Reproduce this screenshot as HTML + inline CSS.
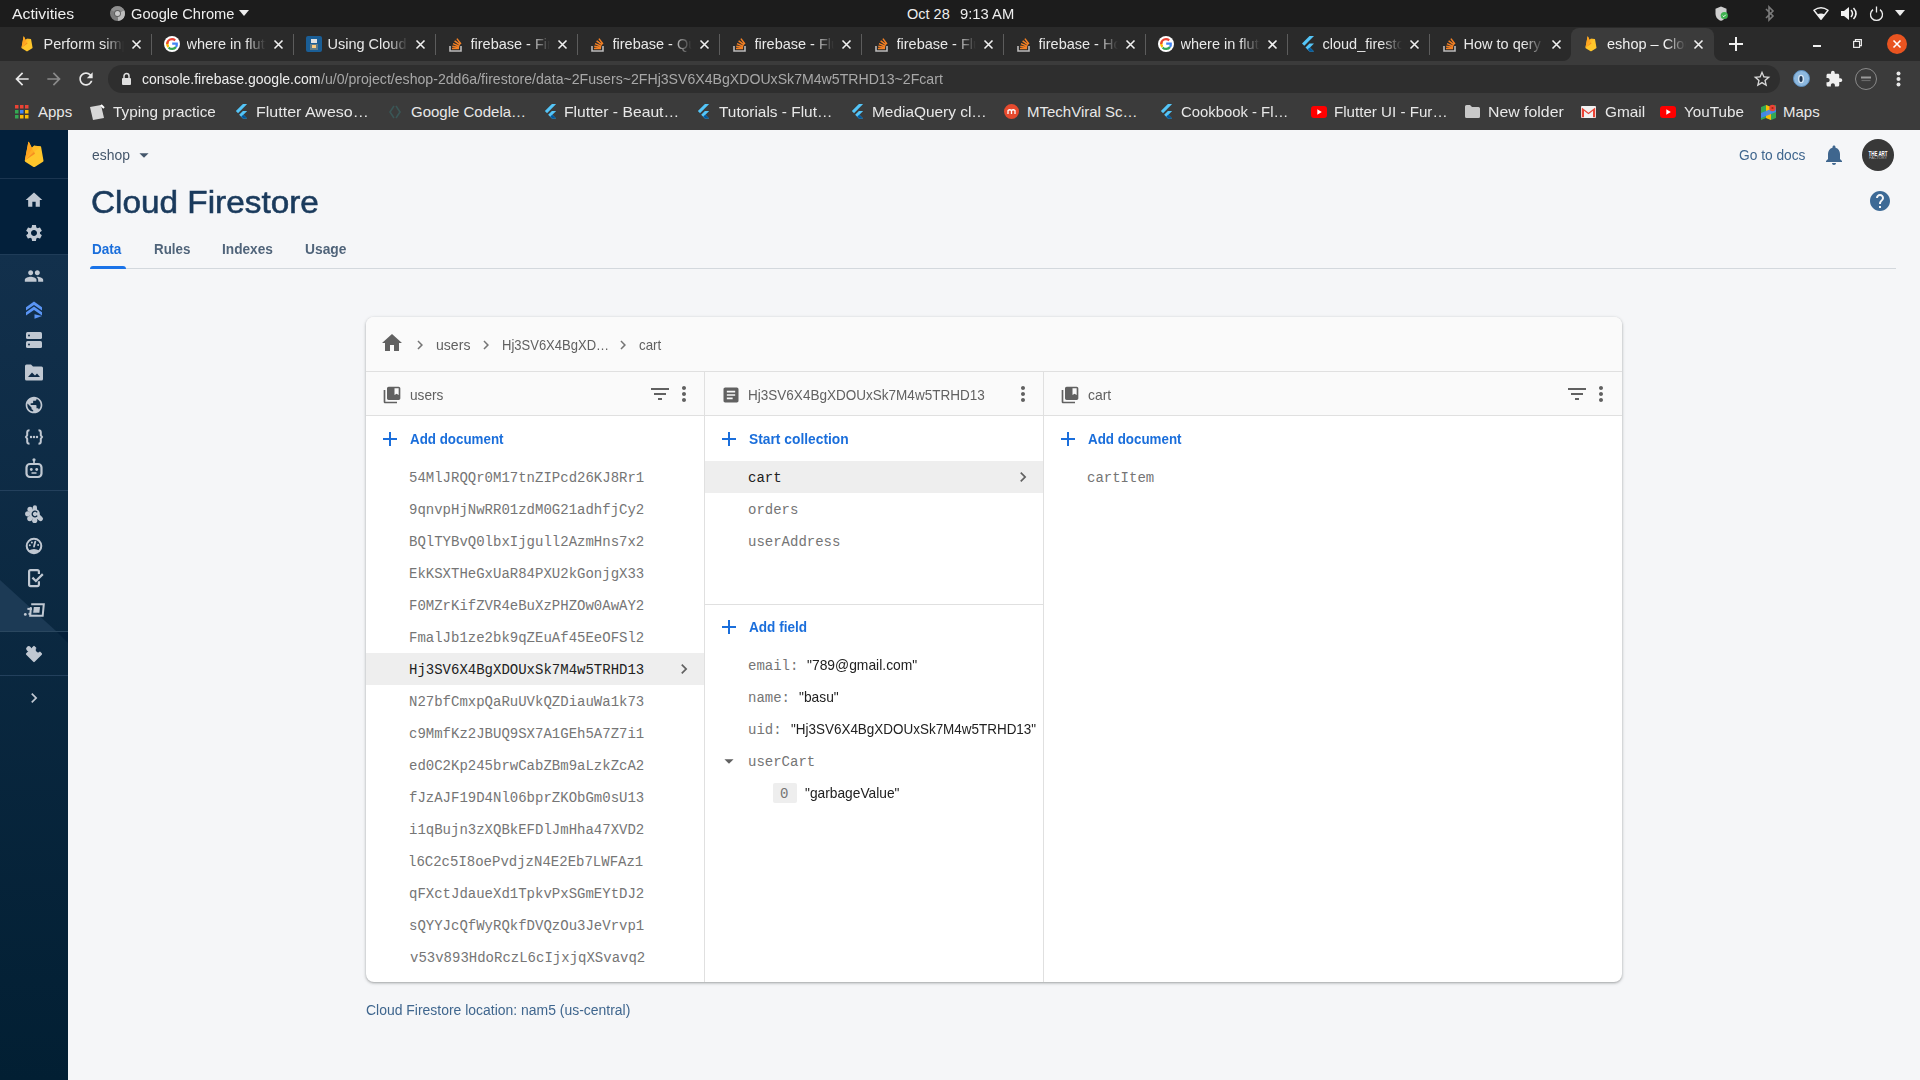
<!DOCTYPE html>
<html><head><meta charset="utf-8"><title>eshop - Cloud Firestore</title>
<style>
*{box-sizing:border-box;margin:0;padding:0}
html,body{width:1920px;height:1080px;overflow:hidden;background:#f5f6f8;font-family:"Liberation Sans",sans-serif}
.a{position:absolute}
.t{position:absolute;line-height:0;white-space:nowrap}
svg.a{overflow:visible}
</style></head><body>
<div class="a" style="left:0px;top:0px;width:1920px;height:27px;background:#1c1c1c;"></div>
<svg class="a" style="left:110px;top:5.5px;" width="15" height="15" viewBox="0 0 15 15"><circle cx="7.5" cy="7.5" r="7.5" fill="#7a7a7a"/><path d="M7.5 7.5L14.2 4.2A7.5 7.5 0 0 1 8.2 15z" fill="#bdbdbd"/><path d="M7.5 7.5L1 4A7.5 7.5 0 0 1 14.2 4.2z" fill="#8f8f8f"/><circle cx="7.5" cy="7.5" r="3.4" fill="#5e5e5e"/><circle cx="7.5" cy="7.5" r="2.5" fill="#c8c8c8"/></svg>
<svg class="a" style="left:239px;top:10px;" width="10" height="6" viewBox="0 0 10 6"><path d="M0 0h10L5 6z" fill="#eeeeee"/></svg>
<svg class="a" style="left:1715px;top:5.5px;" width="14" height="15" viewBox="0 0 14 15"><path d="M6 0.5L11.5 2.8v4.6c0 3.6-2.3 6.4-5.5 7.3C2.8 13.8 0.5 11 0.5 7.4V2.8z" fill="#cfcfcf"/><circle cx="9.3" cy="9.5" r="3.6" fill="#3fb24f"/><path d="M7.7 9.6l1.1 1.1 2-2" stroke="#fff" stroke-width="1" fill="none"/></svg>
<svg class="a" style="left:1764px;top:5px;" width="11" height="17" viewBox="0 0 11 17"><path d="M2 4l7 7-4 4V2l4 4-7 7" stroke="#7a7a7a" stroke-width="1.6" fill="none"/></svg>
<svg class="a" style="left:1813px;top:6.5px;" width="16" height="13" viewBox="0 0 16 13"><path d="M8 12.2L0.9 3.2Q8 -1.8 15.1 3.2z" fill="none" stroke="#f0f0f0" stroke-width="1.4" stroke-linejoin="round"/><path d="M8 12.2L4.2 7.4Q8 5.6 11.8 7.4z" fill="#f0f0f0"/></svg>
<svg class="a" style="left:1840px;top:6px;" width="18" height="15" viewBox="0 0 18 15"><path d="M1 5h3l5-4v13l-5-4H1z" fill="#f0f0f0"/><path d="M11 4q3 3.5 0 7M13.5 2q5 5.5 0 11" stroke="#f0f0f0" stroke-width="1.5" fill="none"/></svg>
<svg class="a" style="left:1869px;top:5.5px;" width="15" height="14" viewBox="0 0 15 14"><path d="M4 3.6A6 6 0 1 0 11 3.6" stroke="#f0f0f0" stroke-width="1.3" fill="none"/><path d="M7.5 0.5v6" stroke="#f0f0f0" stroke-width="1.3"/></svg>
<svg class="a" style="left:1895px;top:10px;" width="10" height="6" viewBox="0 0 10 6"><path d="M0 0h10L5 6z" fill="#eeeeee"/></svg>
<div class="a" style="left:0px;top:27px;width:1920px;height:34px;background:#2a2a2a;"></div>
<svg class="a" style="left:21.4px;top:36.3px;" width="12.0" height="15.6" viewBox="0 0 20 26"><path d="M0.8 19.4L4.3 1Q4.5 0.3 4.9 1L7.6 6.6 9.8 4.6Q10.2 4.3 10.7 4.6L16.4 5.2Q16.8 5.3 16.9 5.8L19.3 19.6Q19.4 20.2 18.8 20.5L10.6 25.6Q10 25.9 9.4 25.6L1.2 20.4Q0.7 20 0.8 19.4z" fill="#FFC62B"/><path d="M0.8 19.4L4.3 1Q4.5 0.3 4.9 1L9.6 10.2z" fill="#FFA21F"/><path d="M0.8 19.4L9.6 10.2 10.9 12.7z" fill="#F58220" opacity=".85"/><path d="M9.8 4.6Q10.2 4.3 10.7 4.6L16.4 5.2 0.8 19.4z" fill="#FFB626" opacity=".6"/></svg>
<svg class="a" style="left:131.5px;top:40px;" width="9" height="9" viewBox="0 0 9 9"><path d="M0.5 0.5L8.5 8.5M8.5 0.5L0.5 8.5" stroke="#f0f0f0" stroke-width="1.6"/></svg>
<div class="a" style="left:151px;top:34px;width:1px;height:21px;background:#5c5c5c;"></div>
<svg class="a" style="left:163.5px;top:36px;" width="16" height="16" viewBox="0 0 16 16"><circle cx="8" cy="8" r="8" fill="#fff"/><path d="M8 3.2a4.8 4.8 0 0 1 3.2 1.2" stroke="#EA4335" stroke-width="2.2" fill="none"/><path d="M4.4 5a4.8 4.8 0 0 0 0 6" stroke="#FBBC05" stroke-width="2.2" fill="none"/><path d="M4.6 11.4A4.8 4.8 0 0 0 12 11" stroke="#34A853" stroke-width="2.2" fill="none"/><path d="M12 11a4.8 4.8 0 0 0 .8-3.4H8.2" stroke="#4285F4" stroke-width="2.2" fill="none"/><path d="M3.2 8a4.8 4.8 0 0 1 4.8-4.8" stroke="#EA4335" stroke-width="2.2" fill="none"/></svg>
<svg class="a" style="left:273.5px;top:40px;" width="9" height="9" viewBox="0 0 9 9"><path d="M0.5 0.5L8.5 8.5M8.5 0.5L0.5 8.5" stroke="#f0f0f0" stroke-width="1.6"/></svg>
<div class="a" style="left:293px;top:34px;width:1px;height:21px;background:#5c5c5c;"></div>
<svg class="a" style="left:305.5px;top:36px;" width="16" height="16" viewBox="0 0 16 16"><rect width="16" height="16" rx="2" fill="#1a5e96"/><rect x="5" y="3" width="6" height="4" fill="#e0e0e0"/><rect x="4" y="8" width="8" height="6" fill="#607d8b"/><rect x="6" y="9" width="4" height="3" fill="#ffcc80"/></svg>
<svg class="a" style="left:415.5px;top:40px;" width="9" height="9" viewBox="0 0 9 9"><path d="M0.5 0.5L8.5 8.5M8.5 0.5L0.5 8.5" stroke="#f0f0f0" stroke-width="1.6"/></svg>
<div class="a" style="left:435px;top:34px;width:1px;height:21px;background:#5c5c5c;"></div>
<svg class="a" style="left:447.5px;top:36px;" width="16" height="16" viewBox="0 0 16 16"><path d="M2 10v5h11v-5" stroke="#bcbbbb" stroke-width="1.6" fill="none"/><path d="M4 12.5h7M4.3 10.2l6.8 1.2M5 7.6l6.3 2.7M6.6 4.9l5.5 4M8.9 2.6l4 5.4" stroke="#f48024" stroke-width="1.5"/></svg>
<svg class="a" style="left:557.5px;top:40px;" width="9" height="9" viewBox="0 0 9 9"><path d="M0.5 0.5L8.5 8.5M8.5 0.5L0.5 8.5" stroke="#f0f0f0" stroke-width="1.6"/></svg>
<div class="a" style="left:577px;top:34px;width:1px;height:21px;background:#5c5c5c;"></div>
<svg class="a" style="left:589.5px;top:36px;" width="16" height="16" viewBox="0 0 16 16"><path d="M2 10v5h11v-5" stroke="#bcbbbb" stroke-width="1.6" fill="none"/><path d="M4 12.5h7M4.3 10.2l6.8 1.2M5 7.6l6.3 2.7M6.6 4.9l5.5 4M8.9 2.6l4 5.4" stroke="#f48024" stroke-width="1.5"/></svg>
<svg class="a" style="left:699.5px;top:40px;" width="9" height="9" viewBox="0 0 9 9"><path d="M0.5 0.5L8.5 8.5M8.5 0.5L0.5 8.5" stroke="#f0f0f0" stroke-width="1.6"/></svg>
<div class="a" style="left:719px;top:34px;width:1px;height:21px;background:#5c5c5c;"></div>
<svg class="a" style="left:731.5px;top:36px;" width="16" height="16" viewBox="0 0 16 16"><path d="M2 10v5h11v-5" stroke="#bcbbbb" stroke-width="1.6" fill="none"/><path d="M4 12.5h7M4.3 10.2l6.8 1.2M5 7.6l6.3 2.7M6.6 4.9l5.5 4M8.9 2.6l4 5.4" stroke="#f48024" stroke-width="1.5"/></svg>
<svg class="a" style="left:841.5px;top:40px;" width="9" height="9" viewBox="0 0 9 9"><path d="M0.5 0.5L8.5 8.5M8.5 0.5L0.5 8.5" stroke="#f0f0f0" stroke-width="1.6"/></svg>
<div class="a" style="left:861px;top:34px;width:1px;height:21px;background:#5c5c5c;"></div>
<svg class="a" style="left:873.5px;top:36px;" width="16" height="16" viewBox="0 0 16 16"><path d="M2 10v5h11v-5" stroke="#bcbbbb" stroke-width="1.6" fill="none"/><path d="M4 12.5h7M4.3 10.2l6.8 1.2M5 7.6l6.3 2.7M6.6 4.9l5.5 4M8.9 2.6l4 5.4" stroke="#f48024" stroke-width="1.5"/></svg>
<svg class="a" style="left:983.5px;top:40px;" width="9" height="9" viewBox="0 0 9 9"><path d="M0.5 0.5L8.5 8.5M8.5 0.5L0.5 8.5" stroke="#f0f0f0" stroke-width="1.6"/></svg>
<div class="a" style="left:1003px;top:34px;width:1px;height:21px;background:#5c5c5c;"></div>
<svg class="a" style="left:1015.5px;top:36px;" width="16" height="16" viewBox="0 0 16 16"><path d="M2 10v5h11v-5" stroke="#bcbbbb" stroke-width="1.6" fill="none"/><path d="M4 12.5h7M4.3 10.2l6.8 1.2M5 7.6l6.3 2.7M6.6 4.9l5.5 4M8.9 2.6l4 5.4" stroke="#f48024" stroke-width="1.5"/></svg>
<svg class="a" style="left:1125.5px;top:40px;" width="9" height="9" viewBox="0 0 9 9"><path d="M0.5 0.5L8.5 8.5M8.5 0.5L0.5 8.5" stroke="#f0f0f0" stroke-width="1.6"/></svg>
<div class="a" style="left:1145px;top:34px;width:1px;height:21px;background:#5c5c5c;"></div>
<svg class="a" style="left:1157.5px;top:36px;" width="16" height="16" viewBox="0 0 16 16"><circle cx="8" cy="8" r="8" fill="#fff"/><path d="M8 3.2a4.8 4.8 0 0 1 3.2 1.2" stroke="#EA4335" stroke-width="2.2" fill="none"/><path d="M4.4 5a4.8 4.8 0 0 0 0 6" stroke="#FBBC05" stroke-width="2.2" fill="none"/><path d="M4.6 11.4A4.8 4.8 0 0 0 12 11" stroke="#34A853" stroke-width="2.2" fill="none"/><path d="M12 11a4.8 4.8 0 0 0 .8-3.4H8.2" stroke="#4285F4" stroke-width="2.2" fill="none"/><path d="M3.2 8a4.8 4.8 0 0 1 4.8-4.8" stroke="#EA4335" stroke-width="2.2" fill="none"/></svg>
<svg class="a" style="left:1267.5px;top:40px;" width="9" height="9" viewBox="0 0 9 9"><path d="M0.5 0.5L8.5 8.5M8.5 0.5L0.5 8.5" stroke="#f0f0f0" stroke-width="1.6"/></svg>
<div class="a" style="left:1287px;top:34px;width:1px;height:21px;background:#5c5c5c;"></div>
<svg class="a" style="left:1299.5px;top:36px;" width="16" height="16" viewBox="0 0 16 16"><path d="M9.5 0L2 7.5l2.3 2.3L14 0z" fill="#54c5f8"/><path d="M9.5 7.4L5.5 11.4l4 4H14l-4-4 4-4z" fill="#54c5f8"/><path d="M7.8 13.1l1.7 2.3H14l-4-4z" fill="#01579b"/></svg>
<svg class="a" style="left:1409.5px;top:40px;" width="9" height="9" viewBox="0 0 9 9"><path d="M0.5 0.5L8.5 8.5M8.5 0.5L0.5 8.5" stroke="#f0f0f0" stroke-width="1.6"/></svg>
<div class="a" style="left:1429px;top:34px;width:1px;height:21px;background:#5c5c5c;"></div>
<svg class="a" style="left:1441.5px;top:36px;" width="16" height="16" viewBox="0 0 16 16"><path d="M2 10v5h11v-5" stroke="#bcbbbb" stroke-width="1.6" fill="none"/><path d="M4 12.5h7M4.3 10.2l6.8 1.2M5 7.6l6.3 2.7M6.6 4.9l5.5 4M8.9 2.6l4 5.4" stroke="#f48024" stroke-width="1.5"/></svg>
<svg class="a" style="left:1551.5px;top:40px;" width="9" height="9" viewBox="0 0 9 9"><path d="M0.5 0.5L8.5 8.5M8.5 0.5L0.5 8.5" stroke="#f0f0f0" stroke-width="1.6"/></svg>
<div class="a" style="left:1571px;top:28px;width:143px;height:34px;background:#3b3b3b;border-radius:8px 8px 0 0"></div>
<div class="a" style="left:1563px;top:53px;width:8px;height:8px;background:radial-gradient(circle at 0 0,#2a2a2a 7.5px,#3b3b3b 8.5px)"></div>
<div class="a" style="left:1714px;top:53px;width:8px;height:8px;background:radial-gradient(circle at 100% 0,#2a2a2a 7.5px,#3b3b3b 8.5px)"></div>
<svg class="a" style="left:1585px;top:36px;" width="11.923076923076923" height="15.5" viewBox="0 0 20 26"><path d="M0.8 19.4L4.3 1Q4.5 0.3 4.9 1L7.6 6.6 9.8 4.6Q10.2 4.3 10.7 4.6L16.4 5.2Q16.8 5.3 16.9 5.8L19.3 19.6Q19.4 20.2 18.8 20.5L10.6 25.6Q10 25.9 9.4 25.6L1.2 20.4Q0.7 20 0.8 19.4z" fill="#FFC62B"/><path d="M0.8 19.4L4.3 1Q4.5 0.3 4.9 1L9.6 10.2z" fill="#FFA21F"/><path d="M0.8 19.4L9.6 10.2 10.9 12.7z" fill="#F58220" opacity=".85"/><path d="M9.8 4.6Q10.2 4.3 10.7 4.6L16.4 5.2 0.8 19.4z" fill="#FFB626" opacity=".6"/></svg>
<svg class="a" style="left:1694px;top:40px;" width="9" height="9" viewBox="0 0 9 9"><path d="M0.5 0.5L8.5 8.5M8.5 0.5L0.5 8.5" stroke="#f0f0f0" stroke-width="1.6"/></svg>
<svg class="a" style="left:1729px;top:37px;" width="14" height="14" viewBox="0 0 14 14"><path d="M7 0v14M0 7h14" stroke="#f0f0f0" stroke-width="2"/></svg>
<div class="a" style="left:1813px;top:45px;width:8px;height:2px;background:#f0f0f0;"></div>
<svg class="a" style="left:1853px;top:39px;" width="9" height="9" viewBox="0 0 10 10"><rect x="0.7" y="2.7" width="6.6" height="6.6" stroke="#f0f0f0" stroke-width="1.3" fill="none"/><path d="M2.7 2.7V0.7h6.6v6.6H7.3" stroke="#f0f0f0" stroke-width="1.3" fill="none"/></svg>
<svg class="a" style="left:1887px;top:34px;" width="20" height="20" viewBox="0 0 20 20"><circle cx="10" cy="10" r="10" fill="#e95420"/><path d="M6.5 6.5l7 7M13.5 6.5l-7 7" stroke="#fff" stroke-width="1.6"/></svg>
<div class="a" style="left:0px;top:61px;width:1920px;height:34px;background:#3b3b3b;"></div>
<svg class="a" style="left:12.0px;top:69.0px;" width="20" height="20" viewBox="0 0 24 24"><path fill="#e8e8e8" d="M20 11H7.83l5.59-5.59L12 4l-8 8 8 8 1.41-1.41L7.830 13H20v-2z"/></svg>
<svg class="a" style="left:44.0px;top:69.0px;" width="20" height="20" viewBox="0 0 24 24"><path fill="#8a8a8a" d="M12 4l-1.41 1.41L16.17 11H4v2h12.17l-5.58 5.59L12 20l8-8z"/></svg>
<svg class="a" style="left:76.0px;top:69.0px;" width="20" height="20" viewBox="0 0 24 24"><path fill="#e8e8e8" d="M17.65 6.35C16.2 4.9 14.21 4 12 4c-4.42 0-7.99 3.58-7.99 8s3.57 8 7.990 8c3.73 0 6.84-2.55 7.73-6h-2.08c-.82 2.33-3.04 4-5.65 4-3.31 0-6-2.69-6-6s2.69-6 6-6c1.66 0 3.14.69 4.22 1.78L13 11h7V4l-2.35 2.35z"/></svg>
<div class="a" style="left:108px;top:65px;width:1672px;height:28px;background:#2e2e2e;border-radius:14px"></div>
<svg class="a" style="left:122px;top:72px;" width="9" height="13" viewBox="0 0 9 13"><path d="M2 6V4a2.5 2.5 0 0 1 5 0v2" stroke="#e0e0e0" stroke-width="1.5" fill="none"/><rect x="0" y="6" width="9" height="7" rx="1" fill="#e0e0e0"/></svg>
<svg class="a" style="left:1752.0px;top:69.0px;" width="20" height="20" viewBox="0 0 24 24"><path fill="#d8d8d8" d="M22 9.24l-7.19-.62L12 2 9.19 8.63 2 9.24l5.46 4.73L5.82 21 12 17.27 18.18 21l-1.63-7.03L22 9.24zM12 15.4l-3.76 2.27 1-4.28-3.32-2.88 4.38-.38L12 6.1l1.71 4.04 4.38.38-3.32 2.88 1 4.28L12 15.4z"/></svg>
<svg class="a" style="left:1793px;top:70px;" width="17" height="17" viewBox="0 0 17 17"><circle cx="8.5" cy="8.5" r="8" fill="#8db8de"/><circle cx="8.5" cy="8.5" r="8" fill="none" stroke="#5d8fbf" stroke-width="1"/><ellipse cx="8" cy="9" rx="3" ry="4.2" fill="#d6e6f4"/><ellipse cx="8" cy="9" rx="1.6" ry="3" fill="#1f3550"/></svg>
<svg class="a" style="left:1825.0px;top:70.0px;" width="18" height="18" viewBox="0 0 24 24"><path fill="#f0f0f0" d="M20.5 11H19V7c0-1.1-.9-2-2-2h-4V3.5C13 2.12 11.88 1 10.5 1S8 2.120 8 3.5V5H4c-1.1 0-1.99.9-1.99 2v3.8H3.5c1.49 0 2.7 1.21 2.7 2.7s-1.21 2.7-2.7 2.7H2V20c0 1.1.9 2 2 2h3.8v-1.5c0-1.49 1.21-2.7 2.7-2.7 1.49 0 2.7 1.21 2.7 2.7V22H17c1.1 0 2-.9 2-2v-4h1.5c1.38 0 2.5-1.12 2.5-2.5S21.88 11 20.5 11z"/></svg>
<svg class="a" style="left:1855px;top:68px;" width="22" height="22" viewBox="0 0 22 22"><circle cx="11" cy="11" r="10.5" fill="#3b3b3b" stroke="#8a8a8a" stroke-width="1"/><path d="M6 9.5h10" stroke="#9a9a9a" stroke-width="2"/><path d="M6.5 12.5h9" stroke="#6a6a6a" stroke-width="1.2"/></svg>
<svg class="a" style="left:1896px;top:71px;" width="5" height="16" viewBox="0 0 5 16"><circle cx="2.5" cy="2.5" r="2" fill="#e8e8e8"/><circle cx="2.5" cy="8" r="2" fill="#e8e8e8"/><circle cx="2.5" cy="13.5" r="2" fill="#e8e8e8"/></svg>
<div class="a" style="left:0px;top:95px;width:1920px;height:35px;background:#3b3b3b;"></div>
<svg class="a" style="left:15px;top:105px;" width="14" height="14" viewBox="0 0 14 14"><rect x="0" y="0" width="3.5" height="3.5" fill="#ea4335"/><rect x="5" y="0" width="3.5" height="3.5" fill="#ea4335"/><rect x="10" y="0" width="3.5" height="3.5" fill="#ea4335"/><rect x="0" y="5" width="3.5" height="3.5" fill="#34a853"/><rect x="5" y="5" width="3.5" height="3.5" fill="#4285f4"/><rect x="10" y="5" width="3.5" height="3.5" fill="#fbbc05"/><rect x="0" y="10" width="3.5" height="3.5" fill="#34a853"/><rect x="5" y="10" width="3.5" height="3.5" fill="#fbbc05"/><rect x="10" y="10" width="3.5" height="3.5" fill="#fbbc05"/></svg>
<svg class="a" style="left:89px;top:104px;" width="16" height="16" viewBox="0 0 16 16"><path d="M1 3l11-2 3 13-11 2z" fill="#d6d6d6"/><path d="M12 1l3 3" stroke="#fff" stroke-width="2"/></svg>
<svg class="a" style="left:234px;top:104px;" width="15" height="15" viewBox="0 0 16 16"><path d="M9.5 0L2 7.5l2.3 2.3L14 0z" fill="#54c5f8"/><path d="M9.5 7.4L5.5 11.4l4 4H14l-4-4 4-4z" fill="#54c5f8"/><path d="M7.8 13.1l1.7 2.3H14l-4-4z" fill="#01579b"/></svg>
<svg class="a" style="left:543px;top:104px;" width="15" height="15" viewBox="0 0 16 16"><path d="M9.5 0L2 7.5l2.3 2.3L14 0z" fill="#54c5f8"/><path d="M9.5 7.4L5.5 11.4l4 4H14l-4-4 4-4z" fill="#54c5f8"/><path d="M7.8 13.1l1.7 2.3H14l-4-4z" fill="#01579b"/></svg>
<svg class="a" style="left:696px;top:104px;" width="15" height="15" viewBox="0 0 16 16"><path d="M9.5 0L2 7.5l2.3 2.3L14 0z" fill="#54c5f8"/><path d="M9.5 7.4L5.5 11.4l4 4H14l-4-4 4-4z" fill="#54c5f8"/><path d="M7.8 13.1l1.7 2.3H14l-4-4z" fill="#01579b"/></svg>
<svg class="a" style="left:850px;top:104px;" width="15" height="15" viewBox="0 0 16 16"><path d="M9.5 0L2 7.5l2.3 2.3L14 0z" fill="#54c5f8"/><path d="M9.5 7.4L5.5 11.4l4 4H14l-4-4 4-4z" fill="#54c5f8"/><path d="M7.8 13.1l1.7 2.3H14l-4-4z" fill="#01579b"/></svg>
<svg class="a" style="left:1159px;top:104px;" width="15" height="15" viewBox="0 0 16 16"><path d="M9.5 0L2 7.5l2.3 2.3L14 0z" fill="#54c5f8"/><path d="M9.5 7.4L5.5 11.4l4 4H14l-4-4 4-4z" fill="#54c5f8"/><path d="M7.8 13.1l1.7 2.3H14l-4-4z" fill="#01579b"/></svg>
<svg class="a" style="left:389px;top:105px;" width="12" height="14" viewBox="0 0 12 14"><path d="M5 1L1 7l4 6M7 1l4 6-4 6" stroke="#3a5656" stroke-width="1.6" fill="none"/></svg>
<svg class="a" style="left:1004px;top:104px;" width="15" height="15" viewBox="0 0 15 15"><circle cx="7.5" cy="7.5" r="7.5" fill="#e64a2e"/><path d="M4 10V6.5q1.7-1.5 3.5 0V10M7.5 6.5q1.7-1.5 3.5 0V10" stroke="#fff" stroke-width="1.3" fill="none"/></svg>
<svg class="a" style="left:1311px;top:106px;" width="16" height="12" viewBox="0 0 16 12"><rect width="16" height="12" rx="3" fill="#f00"/><path d="M6.3 3.3v5.4L10.8 6z" fill="#fff"/></svg>
<svg class="a" style="left:1465px;top:105px;" width="15" height="13" viewBox="0 0 15 13"><path d="M0 1.5A1.5 1.5 0 0 1 1.5 0H5l2 2h6.5A1.5 1.5 0 0 1 15 3.5v8A1.5 1.5 0 0 1 13.5 13h-12A1.5 1.5 0 0 1 0 11.5z" fill="#c8c8c8"/></svg>
<svg class="a" style="left:1581px;top:106px;" width="15" height="12" viewBox="0 0 15 12"><rect width="15" height="12" rx="1" fill="#f2f2f2"/><path d="M0.8 1.5L7.5 6.8 14.2 1.5V11.2H12V4.8L7.5 8.3 3 4.8V11.2H0.8z" fill="#ea4335"/></svg>
<svg class="a" style="left:1660px;top:106px;" width="16" height="12" viewBox="0 0 16 12"><rect width="16" height="12" rx="3" fill="#f00"/><path d="M6.3 3.3v5.4L10.8 6z" fill="#fff"/></svg>
<svg class="a" style="left:1761px;top:104px;" width="15" height="16" viewBox="0 0 15 16"><path d="M0 3l5-2 5 2 5-2v13l-5 2-5-2-5 2z" fill="#34a853"/><path d="M5 1l5 2v13L5 14z" fill="#fbbc05"/><path d="M0 9l15-6v5L0 14z" fill="#4285f4" opacity=".9"/><circle cx="11.5" cy="4" r="3.2" fill="#ea4335"/><circle cx="11.5" cy="4" r="1.1" fill="#a52714"/></svg>
<div class="a" style="left:0px;top:130px;width:68px;height:950px;background:linear-gradient(180deg,#12304c 124px,#021f33 100%);"></div>
<div class="a" style="left:0px;top:130px;width:68px;height:124px;background:#03203b;"></div>
<div class="a" style="left:0px;top:178px;width:68px;height:1px;background:#1b3550;"></div>
<div class="a" style="left:0px;top:254px;width:68px;height:1px;background:#1f3c58;"></div>
<div class="a" style="left:0;top:580px;width:68px;height:51px;background:#1c3a55;clip-path:polygon(0 0,56px 51px,0 51px)"></div>
<div class="a" style="left:56px;top:631px;width:12px;height:12px;background:#04203a;clip-path:polygon(0 0,100% 0,100% 100%)"></div>
<div class="a" style="left:0px;top:490px;width:68px;height:1px;background:#23405c;"></div>
<div class="a" style="left:0px;top:631px;width:68px;height:1px;background:#2a475f;"></div>
<div class="a" style="left:0px;top:675px;width:68px;height:1px;background:#23405c;"></div>
<svg class="a" style="left:24.2px;top:140.7px;" width="20.23076923076923" height="26.3" viewBox="0 0 20 26"><path d="M0.8 19.4L4.3 1Q4.5 0.3 4.9 1L7.6 6.6 9.8 4.6Q10.2 4.3 10.7 4.6L16.4 5.2Q16.8 5.3 16.9 5.8L19.3 19.6Q19.4 20.2 18.8 20.5L10.6 25.6Q10 25.9 9.4 25.6L1.2 20.4Q0.7 20 0.8 19.4z" fill="#FFC62B"/><path d="M0.8 19.4L4.3 1Q4.5 0.3 4.9 1L9.6 10.2z" fill="#FFA21F"/><path d="M0.8 19.4L9.6 10.2 10.9 12.7z" fill="#F58220" opacity=".85"/><path d="M9.8 4.6Q10.2 4.3 10.7 4.6L16.4 5.2 0.8 19.4z" fill="#FFB626" opacity=".6"/></svg>
<svg class="a" style="left:24.0px;top:190.0px;" width="20" height="20" viewBox="0 0 24 24"><path fill="#c0c8d2" d="M10 20v-6h4v6h5v-8h3L12 3 2 12h3v8z"/></svg>
<svg class="a" style="left:24.0px;top:223.0px;" width="20" height="20" viewBox="0 0 24 24"><path fill="#c0c8d2" d="M19.14 12.94c.04-.3.06-.61.06-.94 0-.32-.02-.64-.07-.94l2.03-1.58c.18-.14.23-.41.12-.61l-1.92-3.32c-.12-.22-.37-.29-.59-.22l-2.39.96c-.5-.38-1.03-.7-1.62-.94l-.36-2.54c-.04-.24-.24-.41-.48-.41h-3.84c-.24 0-.43.17-.47.41l-.36 2.54c-.59.24-1.13.57-1.62.94l-2.39-.96c-.22-.08-.47 0-.59.22L2.74 8.87c-.12.21-.08.47.12.61l2.03 1.58c-.05.3-.09.63-.09.94s.02.64.07.94l-2.03 1.58c-.18.14-.23.41-.12.61l1.92 3.32c.12.22.37.29.59.22l2.39-.96c.5.38 1.030.7 1.62.94l.36 2.54c.05.24.24.41.48.41h3.84c.24 0 .44-.17.47-.41l.36-2.54c.59-.24 1.13-.56 1.62-.94l2.39.96c.22.08.47 0 .59-.22l1.92-3.32c.12-.22.07-.47-.12-.61l-2.01-1.58zM12 15.6c-1.98 0-3.6-1.62-3.6-3.6s1.62-3.6 3.6-3.6 3.6 1.62 3.6 3.6-1.62 3.6-3.6 3.6z"/></svg>
<svg class="a" style="left:24.0px;top:266.0px;" width="20" height="20" viewBox="0 0 24 24"><path fill="#c0c8d2" d="M16 11c1.66 0 2.99-1.34 2.99-3S17.66 5 16 5c-1.66 0-3 1.34-3 3s1.34 3 3 3zm-8 0c1.66 0 2.99-1.34 2.99-3S9.66 5 8 5C6.34 5 5 6.34 5 8s1.34 3 3 3zm0 2c-2.33 0-7 1.170-7 3.5V19h14v-2.5c0-2.33-4.67-3.5-7-3.5zm8 0c-.29 0-.62.02-.97.05 1.16.84 1.97 1.97 1.97 3.45V19h6v-2.5c0-2.33-4.67-3.5-7-3.5z"/></svg>
<svg class="a" style="left:24px;top:298px;" width="20" height="21" viewBox="0 0 20 21"><path d="M2 9.2L10 3.6l8 5.6v3.4L10 7 2 12.6z" fill="#5a95f5"/><path d="M2 14.2L10 8.6l8 5.6v3.4L10 12 2 17.6z" fill="#5a95f5"/><path d="M10.5 16.2l7.5 1.9-7.5 2.6z" fill="#5a95f5"/></svg>
<svg class="a" style="left:25px;top:331px;" width="18" height="18" viewBox="0 0 18 18"><rect x="1" y="1" width="16" height="7" rx="1.5" fill="#c0c8d2"/><rect x="1" y="10" width="16" height="7" rx="1.5" fill="#c0c8d2"/><circle cx="4" cy="4.5" r="1" fill="#0f2b47"/><circle cx="4" cy="13.5" r="1" fill="#0f2b47"/></svg>
<svg class="a" style="left:25px;top:364px;" width="18" height="17" viewBox="0 0 18 17"><path d="M0 2a1.5 1.5 0 0 1 1.5-1.5H6L8 2.5h8.5A1.5 1.5 0 0 1 18 4v11a1.5 1.5 0 0 1-1.5 1.5h-15A1.5 1.5 0 0 1 0 15z" fill="#c0c8d2"/><path d="M3 13l4-4.5 3 3 2-2 3 3.5z" fill="#0f2b47"/></svg>
<svg class="a" style="left:24.0px;top:395.0px;" width="20" height="20" viewBox="0 0 24 24"><path fill="#c0c8d2" d="M12 2C6.48 2 2 6.48 2 12s4.48 10 10 10 10-4.48 10-10S17.52 2 12 2zm-1 17.93c-3.95-.49-7-3.85-7-7.93 0-.62.08-1.21.21-1.79L9 15v1c0 1.1.9 2 2 2v1.93zm6.9-2.54c-.26-.81-1-1.39-1.9-1.39h-1v-3c0-.55-.45-1-1-1H8v-2h2c.55 0 1-.45 1-1V7h2c1.1 0 2-.9 2-2v-.41c2.93 1.19 5 4.06 5 7.41 0 2.08-.8 3.97-2.1 5.39z"/></svg>
<svg class="a" style="left:25px;top:428px;" width="18" height="18" viewBox="0 0 18 18"><path d="M4.5 2.2Q2.2 2.2 2.2 4.5v2.8L1 9l1.2 1.7v2.8Q2.2 15.8 4.5 15.8M13.5 2.2q2.3 0 2.3 2.3v2.8L17 9l-1.2 1.7v2.8q0 2.3-2.3 2.3" stroke="#c0c8d2" stroke-width="2" fill="none"/><circle cx="6" cy="9" r="1.2" fill="#c0c8d2"/><circle cx="9" cy="9" r="1.2" fill="#c0c8d2"/><circle cx="12" cy="9" r="1.2" fill="#c0c8d2"/></svg>
<svg class="a" style="left:25px;top:458px;" width="18" height="20" viewBox="0 0 18 20"><circle cx="9" cy="1.8" r="1.6" fill="#c0c8d2"/><path d="M9 3v3" stroke="#c0c8d2" stroke-width="1.6"/><rect x="1.5" y="6" width="15" height="13" rx="3.5" stroke="#c0c8d2" stroke-width="2.2" fill="none"/><circle cx="6.3" cy="11.5" r="1.4" fill="#c0c8d2"/><circle cx="11.7" cy="11.5" r="1.4" fill="#c0c8d2"/><path d="M6.5 15h5" stroke="#c0c8d2" stroke-width="1.5"/></svg>
<svg class="a" style="left:25px;top:505px;" width="18" height="18" viewBox="0 0 18 18"><rect x="7.8" y="0.2" width="4.2" height="6.5" rx="2.1" fill="#c0c8d2"/><circle cx="5" cy="4.3" r="2.6" fill="#c0c8d2"/><circle cx="2.7" cy="8.8" r="2.6" fill="#c0c8d2"/><circle cx="4.8" cy="13.6" r="2.6" fill="#c0c8d2"/><circle cx="9.7" cy="15.4" r="2.6" fill="#c0c8d2"/><path d="M13.2 11.6L15.6 13.7" stroke="#c0c8d2" stroke-width="4.8" stroke-linecap="round"/><circle cx="9.7" cy="9" r="5.2" fill="#c0c8d2"/><path d="M12.2 7.3A2.8 2.8 0 1 0 12.2 10.7" fill="none" stroke="#0b2742" stroke-width="1.3"/></svg>
<svg class="a" style="left:25px;top:537px;" width="18" height="18" viewBox="0 0 18 18"><circle cx="9" cy="9" r="7.3" stroke="#c0c8d2" stroke-width="2" fill="none"/><path d="M3.6 13.6Q9 10.2 14.4 13.6L13.6 14.8Q9 17.8 4.4 14.8z" fill="#c0c8d2"/><path d="M9 9.6L10.3 4.6" stroke="#c0c8d2" stroke-width="1.8" stroke-linecap="round"/><circle cx="4.8" cy="8.2" r="1" fill="#c0c8d2"/><circle cx="6.9" cy="5.6" r="1" fill="#c0c8d2"/><circle cx="13.1" cy="7.9" r="1" fill="#c0c8d2"/></svg>
<svg class="a" style="left:26px;top:567px;" width="18" height="21" viewBox="0 0 18 21"><path d="M12.9 7V4.6a1.5 1.5 0 0 0-1.5-1.5H4.6A1.5 1.5 0 0 0 3.1 4.6v13a1.5 1.5 0 0 0 1.5 1.5h6.8a1.5 1.5 0 0 0 1.5-1.5V14.2" stroke="#c0c8d2" stroke-width="2.2" fill="none"/><path d="M6.4 10.6L9.9 14L16.8 7.1" stroke="#c0c8d2" stroke-width="2.2" fill="none"/></svg>
<svg class="a" style="left:23px;top:603px;" width="22" height="14" viewBox="0 0 22 14"><path d="M8.2 1.2H20.8L19.7 12.8H7.2L7.9 4.2" stroke="#c0c8d2" stroke-width="2" fill="none"/><path d="M10.8 3.9h6.2l-.6 5.8h-6.2z" fill="#c0c8d2"/><path d="M4.4 5.9H9" stroke="#c0c8d2" stroke-width="2"/><circle cx="2.3" cy="11.4" r="1.4" fill="#c0c8d2"/><path d="M5.5 10.9H8" stroke="#c0c8d2" stroke-width="2"/></svg>
<svg class="a" style="left:24px;top:644px;" width="20" height="20" viewBox="0 0 20 20"><g transform="translate(10 10) rotate(45)"><rect x="-6" y="-6" width="12" height="12" rx="1" fill="#c0c8d2"/><circle cx="-7.4" cy="0" r="2.6" fill="#c0c8d2"/><circle cx="0" cy="-5.8" r="2.4" fill="#0b2742"/></g></svg>
<svg class="a" style="left:24.0px;top:688.0px;" width="20" height="20" viewBox="0 0 24 24"><path fill="#c0c8d2" d="M10 6L8.59 7.41 13.17 12l-4.58 4.59L10 18l6-6z"/></svg>
<div class="a" style="left:68px;top:130px;width:1852px;height:950px;background:#f5f6f8;"></div>
<svg class="a" style="left:133.0px;top:144.0px;" width="22" height="22" viewBox="0 0 24 24"><path fill="#44566b" d="M7 10l5 5 5-5z"/></svg>
<div class="a" style="left:90px;top:268px;width:1806px;height:1px;background:#d3d8dd;"></div>
<div class="a" style="left:90px;top:266px;width:36px;height:3px;background:#1a73e8;border-radius:3px 3px 0 0"></div>
<svg class="a" style="left:1822.0px;top:143.0px;" width="24" height="24" viewBox="0 0 24 24"><path fill="#3f668e" d="M12 22c1.1 0 2-.9 2-2h-4c0 1.1.89 2 2 2zm6-6v-5c0-3.07-1.64-5.64-4.5-6.32V4c0-.83-.67-1.5-1.5-1.5s-1.5.67-1.5 1.5v.68C7.63 5.36 6 7.92 6 11v5l-2 2v1h16v-1l-2-2z"/></svg>
<svg class="a" style="left:1862px;top:139px;" width="32" height="32" viewBox="0 0 32 32"><circle cx="16" cy="16" r="16" fill="#383838"/><text x="6.5" y="16.5" font-family="Liberation Sans" font-size="6.5" font-weight="bold" fill="#fff" textLength="19" lengthAdjust="spacingAndGlyphs">THE ART</text><text x="7" y="20" font-family="Liberation Sans" font-size="3.5" fill="#bdbdbd" textLength="18" lengthAdjust="spacingAndGlyphs">FACTORY</text></svg>
<svg class="a" style="left:1868.0px;top:189.0px;" width="24" height="24" viewBox="0 0 24 24"><path fill="#3d6a96" d="M12 2C6.48 2 2 6.48 2 12s4.48 10 10 10 10-4.48 10-10S17.52 2 12 2zm1 17h-2v-2h2v2zm2.07-7.75l-.9.92C13.45 12.9 13 13.5 13 15h-2v-.5c0-1.1.45-2.1 1.17-2.83l1.24-1.26c.37-.36.59-.86.59-1.41 0-1.1-.9-2-2-2s-2 .9-2 2H8c0-2.21 1.79-4 4-4s4 1.79 4 4c0 .88-.36 1.68-.93 2.25z"/></svg>
<div class="a" style="left:366px;top:317px;width:1256px;height:665px;background:#fff;border-radius:8px;box-shadow:0 1px 2px rgba(60,64,67,.3),0 1px 3px 1px rgba(60,64,67,.15);overflow:hidden"><div class="a" style="left:0;top:0;width:1256px;height:55px;background:#fafafa;border-bottom:1px solid #e0e0e0"></div><div class="a" style="left:0;top:55px;width:1256px;height:44px;background:#fafafa;border-bottom:1px solid #e0e0e0"></div><div class="a" style="left:338px;top:55px;width:1px;height:611px;background:#e0e0e0"></div><div class="a" style="left:677px;top:55px;width:1px;height:611px;background:#e0e0e0"></div><div class="a" style="left:0;top:336px;width:338px;height:32px;background:#eeeeee"></div><div class="a" style="left:339px;top:144px;width:338px;height:32px;background:#eeeeee"></div><div class="a" style="left:339px;top:287px;width:338px;height:1px;background:#e0e0e0"></div></div>
<svg class="a" style="left:380.0px;top:331.0px;" width="24" height="24" viewBox="0 0 24 24"><path fill="#616161" d="M10 20v-6h4v6h5v-8h3L12 3 2 12h3v8z"/></svg>
<svg class="a" style="left:411.0px;top:336.0px;" width="18" height="18" viewBox="0 0 24 24"><path fill="#757575" d="M10 6L8.59 7.41 13.17 12l-4.58 4.59L10 18l6-6z"/></svg>
<svg class="a" style="left:477.0px;top:336.0px;" width="18" height="18" viewBox="0 0 24 24"><path fill="#757575" d="M10 6L8.59 7.41 13.17 12l-4.58 4.59L10 18l6-6z"/></svg>
<svg class="a" style="left:614.0px;top:336.0px;" width="18" height="18" viewBox="0 0 24 24"><path fill="#757575" d="M10 6L8.59 7.41 13.17 12l-4.58 4.59L10 18l6-6z"/></svg>
<svg class="a" style="left:382.0px;top:385.0px;" width="20" height="20" viewBox="0 0 24 24"><path fill="#616161" d="M4 6H2v14c0 1.1.9 2 2 2h14v-2H4V6zm16-4H8c-1.1 0-2 .9-2 2v12c0 1.1.9 2 2 2h12c1.1 0 2-.9 2-2V4c0-1.1-.9-2-2-2zm0 10l-2.5-1.5L15 12V4h5v8z"/></svg>
<svg class="a" style="left:648.0px;top:382.0px;" width="24" height="24" viewBox="0 0 24 24"><path fill="#616161" d="M10 18h4v-2h-4v2zM3 6v2h18V6H3zm3 7h12v-2H6v2z"/></svg>
<svg class="a" style="left:672.0px;top:382.0px;" width="24" height="24" viewBox="0 0 24 24"><path fill="#616161" d="M12 8c1.1 0 2-.9 2-2s-.9-2-2-2-2 .9-2 2 .9 2 2 2zm0 2c-1.1 0-2 .9-2 2s.9 2 2 2 2-.9 2-2-.9-2-2-2zm0 6c-1.1 0-2 .9-2 2s.9 2 2 2 2-.9 2-2-.9-2-2-2z"/></svg>
<svg class="a" style="left:721.0px;top:385.0px;" width="20" height="20" viewBox="0 0 24 24"><path fill="#616161" d="M19 3H5c-1.1 0-2 .9-2 2v14c0 1.1.9 2 2 2h14c1.1 0 2-.9 2-2V5c0-1.1-.9-2-2-2zM14 17H7v-2h7v2zm3-4H7v-2h10v2zm0-4H7V7h10v2z"/></svg>
<svg class="a" style="left:1011.0px;top:382.0px;" width="24" height="24" viewBox="0 0 24 24"><path fill="#616161" d="M12 8c1.1 0 2-.9 2-2s-.9-2-2-2-2 .9-2 2 .9 2 2 2zm0 2c-1.1 0-2 .9-2 2s.9 2 2 2 2-.9 2-2-.9-2-2-2zm0 6c-1.1 0-2 .9-2 2s.9 2 2 2 2-.9 2-2-.9-2-2-2z"/></svg>
<svg class="a" style="left:1060.0px;top:385.0px;" width="20" height="20" viewBox="0 0 24 24"><path fill="#616161" d="M4 6H2v14c0 1.1.9 2 2 2h14v-2H4V6zm16-4H8c-1.1 0-2 .9-2 2v12c0 1.1.9 2 2 2h12c1.1 0 2-.9 2-2V4c0-1.1-.9-2-2-2zm0 10l-2.5-1.5L15 12V4h5v8z"/></svg>
<svg class="a" style="left:1565.0px;top:382.0px;" width="24" height="24" viewBox="0 0 24 24"><path fill="#616161" d="M10 18h4v-2h-4v2zM3 6v2h18V6H3zm3 7h12v-2H6v2z"/></svg>
<svg class="a" style="left:1589.0px;top:382.0px;" width="24" height="24" viewBox="0 0 24 24"><path fill="#616161" d="M12 8c1.1 0 2-.9 2-2s-.9-2-2-2-2 .9-2 2 .9 2 2 2zm0 2c-1.1 0-2 .9-2 2s.9 2 2 2 2-.9 2-2-.9-2-2-2zm0 6c-1.1 0-2 .9-2 2s.9 2 2 2 2-.9 2-2-.9-2-2-2z"/></svg>
<svg class="a" style="left:378.0px;top:427.0px;" width="24" height="24" viewBox="0 0 24 24"><path fill="#1a6edb" d="M19 13h-6v6h-2v-6H5v-2h6V5h2v6h6v2z"/></svg>
<svg class="a" style="left:717.0px;top:427.0px;" width="24" height="24" viewBox="0 0 24 24"><path fill="#1a6edb" d="M19 13h-6v6h-2v-6H5v-2h6V5h2v6h6v2z"/></svg>
<svg class="a" style="left:1056.0px;top:427.0px;" width="24" height="24" viewBox="0 0 24 24"><path fill="#1a6edb" d="M19 13h-6v6h-2v-6H5v-2h6V5h2v6h6v2z"/></svg>
<svg class="a" style="left:674.0px;top:659.0px;" width="20" height="20" viewBox="0 0 24 24"><path fill="#616161" d="M10 6L8.59 7.41 13.17 12l-4.58 4.59L10 18l6-6z"/></svg>
<svg class="a" style="left:1013.0px;top:467.0px;" width="20" height="20" viewBox="0 0 24 24"><path fill="#616161" d="M10 6L8.59 7.41 13.17 12l-4.58 4.59L10 18l6-6z"/></svg>
<svg class="a" style="left:717.0px;top:615.0px;" width="24" height="24" viewBox="0 0 24 24"><path fill="#1a6edb" d="M19 13h-6v6h-2v-6H5v-2h6V5h2v6h6v2z"/></svg>
<svg class="a" style="left:718.0px;top:750.0px;" width="22" height="22" viewBox="0 0 24 24"><path fill="#616161" d="M7 10l5 5 5-5z"/></svg>
<div class="a" style="left:773px;top:783px;width:24px;height:20px;background:#eeeeee;border-radius:2px"></div>
<div class="t" style="left:12.00px;top:13.93px;font-family:'Liberation Sans',sans-serif;font-size:14.5px;font-weight:400;color:#eeeeee;transform:scaleX(1.0877);transform-origin:0 0;">Activities</div>
<div class="t" style="left:131.00px;top:13.93px;font-family:'Liberation Sans',sans-serif;font-size:14.5px;font-weight:400;color:#eeeeee;transform:scaleX(1.0098);transform-origin:0 0;">Google Chrome</div>
<div class="t" style="left:907.00px;top:13.93px;font-family:'Liberation Sans',sans-serif;font-size:14.5px;font-weight:400;color:#eeeeee;transform:scaleX(1.0000);transform-origin:0 0;">Oct 28</div>
<div class="t" style="left:960.00px;top:13.93px;font-family:'Liberation Sans',sans-serif;font-size:14.5px;font-weight:400;color:#eeeeee;transform:scaleX(1.0192);transform-origin:0 0;">9:13 AM</div>
<div class="a" style="left:43.50px;top:28.92px;width:80.0px;height:30px;overflow:hidden;-webkit-mask-image:linear-gradient(90deg,#000 60px,transparent 80px)"><div class="t" style="left:0;top:15px;font-family:'Liberation Sans',sans-serif;font-size:14.5px;font-weight:400;color:#e8e8e8">Perform simple and</div></div>
<div class="a" style="left:186.50px;top:28.92px;width:79.0px;height:30px;overflow:hidden;-webkit-mask-image:linear-gradient(90deg,#000 59px,transparent 79px)"><div class="t" style="left:0;top:15px;font-family:'Liberation Sans',sans-serif;font-size:14.5px;font-weight:400;color:#e8e8e8">where in flutter</div></div>
<div class="a" style="left:327.50px;top:28.92px;width:80.0px;height:30px;overflow:hidden;-webkit-mask-image:linear-gradient(90deg,#000 60px,transparent 80px)"><div class="t" style="left:0;top:15px;font-family:'Liberation Sans',sans-serif;font-size:14.5px;font-weight:400;color:#e8e8e8">Using Cloud Firestore</div></div>
<div class="a" style="left:470.50px;top:28.92px;width:79.0px;height:30px;overflow:hidden;-webkit-mask-image:linear-gradient(90deg,#000 59px,transparent 79px)"><div class="t" style="left:0;top:15px;font-family:'Liberation Sans',sans-serif;font-size:14.5px;font-weight:400;color:#e8e8e8">firebase - Firestore</div></div>
<div class="a" style="left:612.50px;top:28.92px;width:79.0px;height:30px;overflow:hidden;-webkit-mask-image:linear-gradient(90deg,#000 59px,transparent 79px)"><div class="t" style="left:0;top:15px;font-family:'Liberation Sans',sans-serif;font-size:14.5px;font-weight:400;color:#e8e8e8">firebase - Query</div></div>
<div class="a" style="left:754.50px;top:28.92px;width:79.0px;height:30px;overflow:hidden;-webkit-mask-image:linear-gradient(90deg,#000 59px,transparent 79px)"><div class="t" style="left:0;top:15px;font-family:'Liberation Sans',sans-serif;font-size:14.5px;font-weight:400;color:#e8e8e8">firebase - Flutter</div></div>
<div class="a" style="left:896.50px;top:28.92px;width:79.0px;height:30px;overflow:hidden;-webkit-mask-image:linear-gradient(90deg,#000 59px,transparent 79px)"><div class="t" style="left:0;top:15px;font-family:'Liberation Sans',sans-serif;font-size:14.5px;font-weight:400;color:#e8e8e8">firebase - Flutter</div></div>
<div class="a" style="left:1038.50px;top:28.92px;width:79.0px;height:30px;overflow:hidden;-webkit-mask-image:linear-gradient(90deg,#000 59px,transparent 79px)"><div class="t" style="left:0;top:15px;font-family:'Liberation Sans',sans-serif;font-size:14.5px;font-weight:400;color:#e8e8e8">firebase - How</div></div>
<div class="a" style="left:1180.50px;top:28.92px;width:79.0px;height:30px;overflow:hidden;-webkit-mask-image:linear-gradient(90deg,#000 59px,transparent 79px)"><div class="t" style="left:0;top:15px;font-family:'Liberation Sans',sans-serif;font-size:14.5px;font-weight:400;color:#e8e8e8">where in flutter</div></div>
<div class="a" style="left:1322.50px;top:28.92px;width:79.0px;height:30px;overflow:hidden;-webkit-mask-image:linear-gradient(90deg,#000 59px,transparent 79px)"><div class="t" style="left:0;top:15px;font-family:'Liberation Sans',sans-serif;font-size:14.5px;font-weight:400;color:#e8e8e8">cloud_firestore</div></div>
<div class="a" style="left:1463.50px;top:28.92px;width:80.0px;height:30px;overflow:hidden;-webkit-mask-image:linear-gradient(90deg,#000 60px,transparent 80px)"><div class="t" style="left:0;top:15px;font-family:'Liberation Sans',sans-serif;font-size:14.5px;font-weight:400;color:#e8e8e8">How to qery</div></div>
<div class="a" style="left:1607.00px;top:28.92px;width:79.0px;height:30px;overflow:hidden;-webkit-mask-image:linear-gradient(90deg,#000 59px,transparent 79px)"><div class="t" style="left:0;top:15px;font-family:'Liberation Sans',sans-serif;font-size:14.5px;font-weight:400;color:#f0f0f0">eshop – Cloud Firestore</div></div>
<div class="t" style="left:142.00px;top:79.06px;font-family:'Liberation Sans',sans-serif;font-size:14.1px;font-weight:400;color:#eeeeee;transform:scaleX(0.9944);transform-origin:0 0;">console.firebase.google.com</div>
<div class="t" style="left:321.00px;top:79.06px;font-family:'Liberation Sans',sans-serif;font-size:14.1px;font-weight:400;color:#a8a8a8;transform:scaleX(1.0016);transform-origin:0 0;">/u/0/project/eshop-2dd6a/firestore/data~2Fusers~2FHj3SV6X4BgXDOUxSk7M4w5TRHD13~2Fcart</div>
<div class="t" style="left:38.00px;top:111.75px;font-family:'Liberation Sans',sans-serif;font-size:15px;font-weight:400;color:#e8e8e8;transform:scaleX(1.0000);transform-origin:0 0;">Apps</div>
<div class="t" style="left:113.00px;top:111.75px;font-family:'Liberation Sans',sans-serif;font-size:15px;font-weight:400;color:#e8e8e8;transform:scaleX(1.0198);transform-origin:0 0;">Typing practice</div>
<div class="t" style="left:255.93px;top:111.75px;font-family:'Liberation Sans',sans-serif;font-size:15px;font-weight:400;color:#e8e8e8;transform:scaleX(1.0680);transform-origin:0 0;">Flutter Aweso…</div>
<div class="t" style="left:411.00px;top:111.75px;font-family:'Liberation Sans',sans-serif;font-size:15px;font-weight:400;color:#e8e8e8;transform:scaleX(1.0000);transform-origin:0 0;">Google Codela…</div>
<div class="t" style="left:563.95px;top:111.75px;font-family:'Liberation Sans',sans-serif;font-size:15px;font-weight:400;color:#e8e8e8;transform:scaleX(1.0467);transform-origin:0 0;">Flutter - Beaut…</div>
<div class="t" style="left:719.00px;top:111.75px;font-family:'Liberation Sans',sans-serif;font-size:15px;font-weight:400;color:#e8e8e8;transform:scaleX(1.0275);transform-origin:0 0;">Tutorials - Flut…</div>
<div class="t" style="left:871.97px;top:111.75px;font-family:'Liberation Sans',sans-serif;font-size:15px;font-weight:400;color:#e8e8e8;transform:scaleX(1.0275);transform-origin:0 0;">MediaQuery cl…</div>
<div class="t" style="left:1027.00px;top:111.75px;font-family:'Liberation Sans',sans-serif;font-size:15px;font-weight:400;color:#e8e8e8;transform:scaleX(1.0000);transform-origin:0 0;">MTechViral Sc…</div>
<div class="t" style="left:1181.00px;top:111.75px;font-family:'Liberation Sans',sans-serif;font-size:15px;font-weight:400;color:#e8e8e8;transform:scaleX(0.9907);transform-origin:0 0;">Cookbook - Fl…</div>
<div class="t" style="left:1333.99px;top:111.75px;font-family:'Liberation Sans',sans-serif;font-size:15px;font-weight:400;color:#e8e8e8;transform:scaleX(1.0091);transform-origin:0 0;">Flutter UI - Fur…</div>
<div class="t" style="left:1487.94px;top:111.75px;font-family:'Liberation Sans',sans-serif;font-size:15px;font-weight:400;color:#e8e8e8;transform:scaleX(1.0563);transform-origin:0 0;">New folder</div>
<div class="t" style="left:1605.00px;top:111.75px;font-family:'Liberation Sans',sans-serif;font-size:15px;font-weight:400;color:#e8e8e8;transform:scaleX(1.0263);transform-origin:0 0;">Gmail</div>
<div class="t" style="left:1684.00px;top:111.75px;font-family:'Liberation Sans',sans-serif;font-size:15px;font-weight:400;color:#e8e8e8;transform:scaleX(1.0169);transform-origin:0 0;">YouTube</div>
<div class="t" style="left:1783.00px;top:111.75px;font-family:'Liberation Sans',sans-serif;font-size:15px;font-weight:400;color:#e8e8e8;transform:scaleX(1.0000);transform-origin:0 0;">Maps</div>
<div class="t" style="left:92.00px;top:154.75px;font-family:'Liberation Sans',sans-serif;font-size:15px;font-weight:400;color:#44566b;transform:scaleX(0.9268);transform-origin:0 0;">eshop</div>
<div class="t" style="left:90.96px;top:201.80px;font-family:'Liberation Sans',sans-serif;font-size:32px;font-weight:400;color:#1a3a5c;-webkit-text-stroke:0.6px #1a3a5c;transform:scaleX(1.0415);transform-origin:0 0;">Cloud Firestore</div>
<div class="t" style="left:92.06px;top:248.93px;font-family:'Liberation Sans',sans-serif;font-size:14.5px;font-weight:700;color:#1a6edb;transform:scaleX(0.9355);transform-origin:0 0;">Data</div>
<div class="t" style="left:154.08px;top:248.93px;font-family:'Liberation Sans',sans-serif;font-size:14.5px;font-weight:700;color:#50647a;transform:scaleX(0.9211);transform-origin:0 0;">Rules</div>
<div class="t" style="left:222.06px;top:248.93px;font-family:'Liberation Sans',sans-serif;font-size:14.5px;font-weight:700;color:#50647a;transform:scaleX(0.9434);transform-origin:0 0;">Indexes</div>
<div class="t" style="left:305.05px;top:248.93px;font-family:'Liberation Sans',sans-serif;font-size:14.5px;font-weight:700;color:#50647a;transform:scaleX(0.9524);transform-origin:0 0;">Usage</div>
<div class="t" style="left:1739.00px;top:154.75px;font-family:'Liberation Sans',sans-serif;font-size:15px;font-weight:400;color:#3f668e;transform:scaleX(0.9167);transform-origin:0 0;">Go to docs</div>
<div class="t" style="left:436.03px;top:344.93px;font-family:'Liberation Sans',sans-serif;font-size:14.5px;font-weight:400;color:#616161;transform:scaleX(0.9706);transform-origin:0 0;">users</div>
<div class="t" style="left:502.10px;top:344.93px;font-family:'Liberation Sans',sans-serif;font-size:14.5px;font-weight:400;color:#616161;transform:scaleX(0.8974);transform-origin:0 0;">Hj3SV6X4BgXD…</div>
<div class="t" style="left:639.00px;top:344.93px;font-family:'Liberation Sans',sans-serif;font-size:14.5px;font-weight:400;color:#616161;transform:scaleX(0.9200);transform-origin:0 0;">cart</div>
<div class="t" style="left:410.06px;top:394.93px;font-family:'Liberation Sans',sans-serif;font-size:14.5px;font-weight:400;color:#616161;transform:scaleX(0.9412);transform-origin:0 0;">users</div>
<div class="t" style="left:748.07px;top:394.93px;font-family:'Liberation Sans',sans-serif;font-size:14.5px;font-weight:400;color:#616161;transform:scaleX(0.9328);transform-origin:0 0;">Hj3SV6X4BgXDOUxSk7M4w5TRHD13</div>
<div class="t" style="left:1088.00px;top:394.93px;font-family:'Liberation Sans',sans-serif;font-size:14.5px;font-weight:400;color:#616161;transform:scaleX(0.9600);transform-origin:0 0;">cart</div>
<div class="t" style="left:410.00px;top:438.93px;font-family:'Liberation Sans',sans-serif;font-size:14.5px;font-weight:700;color:#1a6edb;transform:scaleX(0.9216);transform-origin:0 0;">Add document</div>
<div class="t" style="left:749.00px;top:438.93px;font-family:'Liberation Sans',sans-serif;font-size:14.5px;font-weight:700;color:#1a6edb;transform:scaleX(0.9519);transform-origin:0 0;">Start collection</div>
<div class="t" style="left:1088.00px;top:438.93px;font-family:'Liberation Sans',sans-serif;font-size:14.5px;font-weight:700;color:#1a6edb;transform:scaleX(0.9216);transform-origin:0 0;">Add document</div>
<div class="t" style="left:409.00px;top:478.36px;font-family:'Liberation Mono',monospace;font-size:14px;font-weight:400;color:#757575;">54MlJRQQr0M17tnZIPcd26KJ8Rr1</div>
<div class="t" style="left:409.00px;top:510.36px;font-family:'Liberation Mono',monospace;font-size:14px;font-weight:400;color:#757575;">9qnvpHjNwRR01zdM0G21adhfjCy2</div>
<div class="t" style="left:409.00px;top:542.36px;font-family:'Liberation Mono',monospace;font-size:14px;font-weight:400;color:#757575;">BQlTYBvQ0lbxIjgull2AzmHns7x2</div>
<div class="t" style="left:409.00px;top:574.36px;font-family:'Liberation Mono',monospace;font-size:14px;font-weight:400;color:#757575;">EkKSXTHeGxUaR84PXU2kGonjgX33</div>
<div class="t" style="left:409.00px;top:606.36px;font-family:'Liberation Mono',monospace;font-size:14px;font-weight:400;color:#757575;">F0MZrKifZVR4eBuXzPHZOw0AwAY2</div>
<div class="t" style="left:409.00px;top:638.36px;font-family:'Liberation Mono',monospace;font-size:14px;font-weight:400;color:#757575;">FmalJb1ze2bk9qZEuAf45EeOFSl2</div>
<div class="t" style="left:409.00px;top:670.36px;font-family:'Liberation Mono',monospace;font-size:14px;font-weight:400;color:#212121;">Hj3SV6X4BgXDOUxSk7M4w5TRHD13</div>
<div class="t" style="left:409.00px;top:702.36px;font-family:'Liberation Mono',monospace;font-size:14px;font-weight:400;color:#757575;">N27bfCmxpQaRuUVkQZDiauWa1k73</div>
<div class="t" style="left:409.00px;top:734.36px;font-family:'Liberation Mono',monospace;font-size:14px;font-weight:400;color:#757575;">c9MmfKz2JBUQ9SX7A1GEh5A7Z7i1</div>
<div class="t" style="left:409.00px;top:766.36px;font-family:'Liberation Mono',monospace;font-size:14px;font-weight:400;color:#757575;">ed0C2Kp245brwCabZBm9aLzkZcA2</div>
<div class="t" style="left:409.00px;top:798.36px;font-family:'Liberation Mono',monospace;font-size:14px;font-weight:400;color:#757575;">fJzAJF19D4Nl06bprZKObGm0sU13</div>
<div class="t" style="left:409.00px;top:830.36px;font-family:'Liberation Mono',monospace;font-size:14px;font-weight:400;color:#757575;">i1qBujn3zXQBkEFDlJmHha47XVD2</div>
<div class="t" style="left:408.00px;top:862.36px;font-family:'Liberation Mono',monospace;font-size:14px;font-weight:400;color:#757575;">l6C2c5I8oePvdjzN4E2Eb7LWFAz1</div>
<div class="t" style="left:409.00px;top:894.36px;font-family:'Liberation Mono',monospace;font-size:14px;font-weight:400;color:#757575;">qFXctJdaueXd1TpkvPxSGmEYtDJ2</div>
<div class="t" style="left:409.00px;top:926.36px;font-family:'Liberation Mono',monospace;font-size:14px;font-weight:400;color:#757575;">sQYYJcQfWyRQkfDVQzOu3JeVrvp1</div>
<div class="t" style="left:410.00px;top:958.36px;font-family:'Liberation Mono',monospace;font-size:14px;font-weight:400;color:#757575;">v53v893HdoRczL6cIjxjqXSvavq2</div>
<div class="t" style="left:748.00px;top:478.36px;font-family:'Liberation Mono',monospace;font-size:14px;font-weight:400;color:#212121;">cart</div>
<div class="t" style="left:748.00px;top:510.36px;font-family:'Liberation Mono',monospace;font-size:14px;font-weight:400;color:#757575;">orders</div>
<div class="t" style="left:748.00px;top:542.36px;font-family:'Liberation Mono',monospace;font-size:14px;font-weight:400;color:#757575;">userAddress</div>
<div class="t" style="left:749.00px;top:626.92px;font-family:'Liberation Sans',sans-serif;font-size:14.5px;font-weight:700;color:#1a6edb;transform:scaleX(0.9355);transform-origin:0 0;">Add field</div>
<div class="t" style="left:748.00px;top:666.36px;font-family:'Liberation Mono',monospace;font-size:14px;font-weight:400;color:#757575;">email:</div>
<div class="t" style="left:807.00px;top:664.92px;font-family:'Liberation Sans',sans-serif;font-size:14.5px;font-weight:400;color:#212121;transform:scaleX(0.9565);transform-origin:0 0;">"789@gmail.com"</div>
<div class="t" style="left:748.00px;top:698.36px;font-family:'Liberation Mono',monospace;font-size:14px;font-weight:400;color:#757575;">name:</div>
<div class="t" style="left:799.00px;top:696.92px;font-family:'Liberation Sans',sans-serif;font-size:14.5px;font-weight:400;color:#212121;transform:scaleX(0.9512);transform-origin:0 0;">"basu"</div>
<div class="t" style="left:748.00px;top:730.36px;font-family:'Liberation Mono',monospace;font-size:14px;font-weight:400;color:#757575;">uid:</div>
<div class="t" style="left:791.00px;top:728.92px;font-family:'Liberation Sans',sans-serif;font-size:14.5px;font-weight:400;color:#212121;transform:scaleX(0.9280);transform-origin:0 0;">"Hj3SV6X4BgXDOUxSk7M4w5TRHD13"</div>
<div class="t" style="left:748.00px;top:762.36px;font-family:'Liberation Mono',monospace;font-size:14px;font-weight:400;color:#757575;">userCart</div>
<div class="t" style="left:780.00px;top:794.36px;font-family:'Liberation Mono',monospace;font-size:14px;font-weight:400;color:#757575;">0</div>
<div class="t" style="left:805.00px;top:792.92px;font-family:'Liberation Sans',sans-serif;font-size:14.5px;font-weight:400;color:#212121;transform:scaleX(0.9495);transform-origin:0 0;">"garbageValue"</div>
<div class="t" style="left:1087.00px;top:478.36px;font-family:'Liberation Mono',monospace;font-size:14px;font-weight:400;color:#757575;">cartItem</div>
<div class="t" style="left:366.00px;top:1010.10px;font-family:'Liberation Sans',sans-serif;font-size:14px;font-weight:400;color:#3f668e;transform:scaleX(0.9962);transform-origin:0 0;">Cloud Firestore location: nam5 (us-central)</div>
</body></html>
